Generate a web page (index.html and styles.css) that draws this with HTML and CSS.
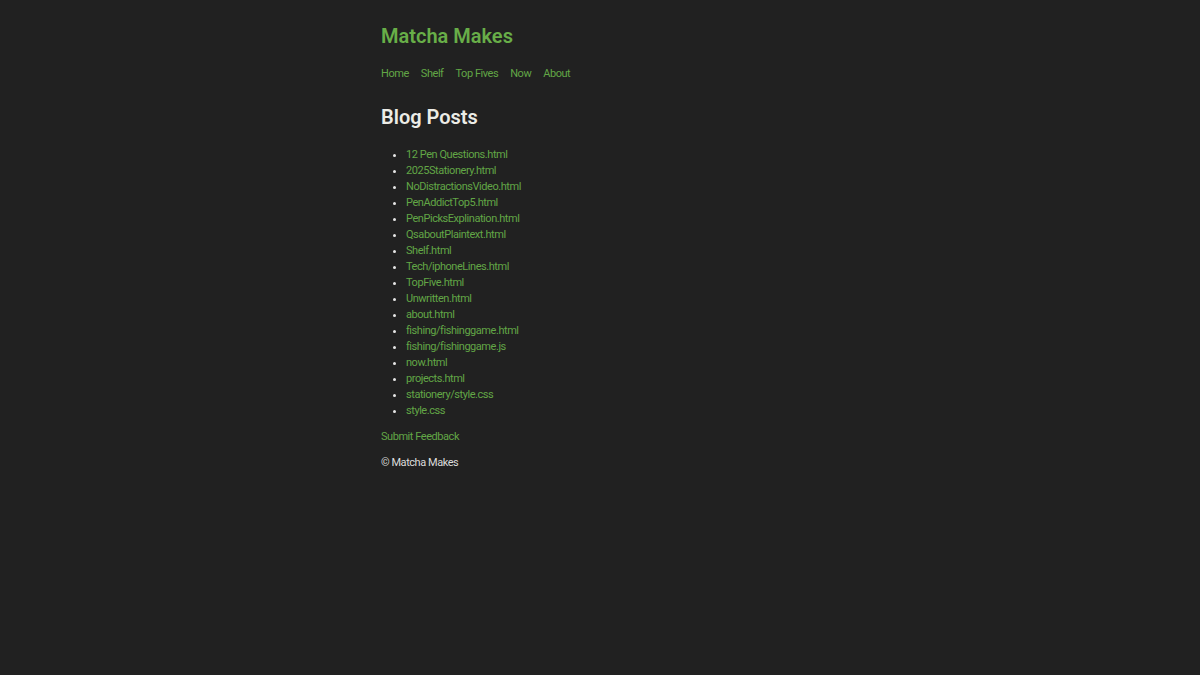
FILE: index.html
```html
<!DOCTYPE html>
<html lang="en">
<head>
    <meta charset="UTF-8">
    <meta name="viewport" content="width=device-width, initial-scale=1.0">
    <title>Matcha Makes</title>
    <link rel="stylesheet" href="styles.css">
</head>
<body>
    <div class="page">
        <header>
            <h1 class="site-title">Matcha Makes</h1>
            <nav class="nav">
                <a href="#">Home</a>
                <a href="#">Shelf</a>
                <a href="#">Top Fives</a>
                <a href="#">Now</a>
                <a href="#">About</a>
            </nav>
        </header>

        <main>
            <h2>Blog Posts</h2>
            <ul class="posts">
                <li><a href="#">12 Pen Questions.html</a></li>
                <li><a href="#">2025Stationery.html</a></li>
                <li><a href="#">NoDistractionsVideo.html</a></li>
                <li><a href="#">PenAddictTop5.html</a></li>
                <li><a href="#">PenPicksExplination.html</a></li>
                <li><a href="#">QsaboutPlaintext.html</a></li>
                <li><a href="#">Shelf.html</a></li>
                <li><a href="#">Tech/iphoneLines.html</a></li>
                <li><a href="#">TopFive.html</a></li>
                <li><a href="#">Unwritten.html</a></li>
                <li><a href="#">about.html</a></li>
                <li><a href="#">fishing/fishinggame.html</a></li>
                <li><a href="#">fishing/fishinggame.js</a></li>
                <li><a href="#">now.html</a></li>
                <li><a href="#">projects.html</a></li>
                <li><a href="#">stationery/style.css</a></li>
                <li><a href="#">style.css</a></li>
            </ul>
        </main>

        <footer>
            <a href="#" class="feedback">Submit Feedback</a>
            <p class="copy">&copy; Matcha Makes</p>
        </footer>
    </div>
</body>
</html>
```

FILE: styles.css
```css
body {
    margin: 0;
    background-color: #212121;
    color: #dcdcdc;
    font-family: Roboto, "Liberation Sans", sans-serif;
    font-size: 11px;
    letter-spacing: -0.45px;
}

a {
    color: #62a646;
    text-decoration: none;
}

.page {
    width: 438px;
    margin: 0 auto;
    padding-top: 22px;
}

.site-title {
    margin: 0;
    color: #68ae48;
    font-size: 20px;
    font-weight: 600;
    line-height: 28px;
    letter-spacing: 0;
}

.nav {
    display: flex;
    gap: 12px;
    margin-top: 17px;
    line-height: 14px;
}

h2 {
    margin: 22px 0 0;
    font-size: 20px;
    font-weight: 600;
    color: #ecece6;
    line-height: 28px;
    letter-spacing: 0;
}

.posts {
    margin: 16px 0 0;
    padding-left: 25px;
    line-height: 16px;
}

.posts li::marker {
    color: #e6e6e6;
}

footer {
    margin-top: 11px;
    line-height: 14px;
}

.copy {
    margin: 12px 0 0;
}
```
